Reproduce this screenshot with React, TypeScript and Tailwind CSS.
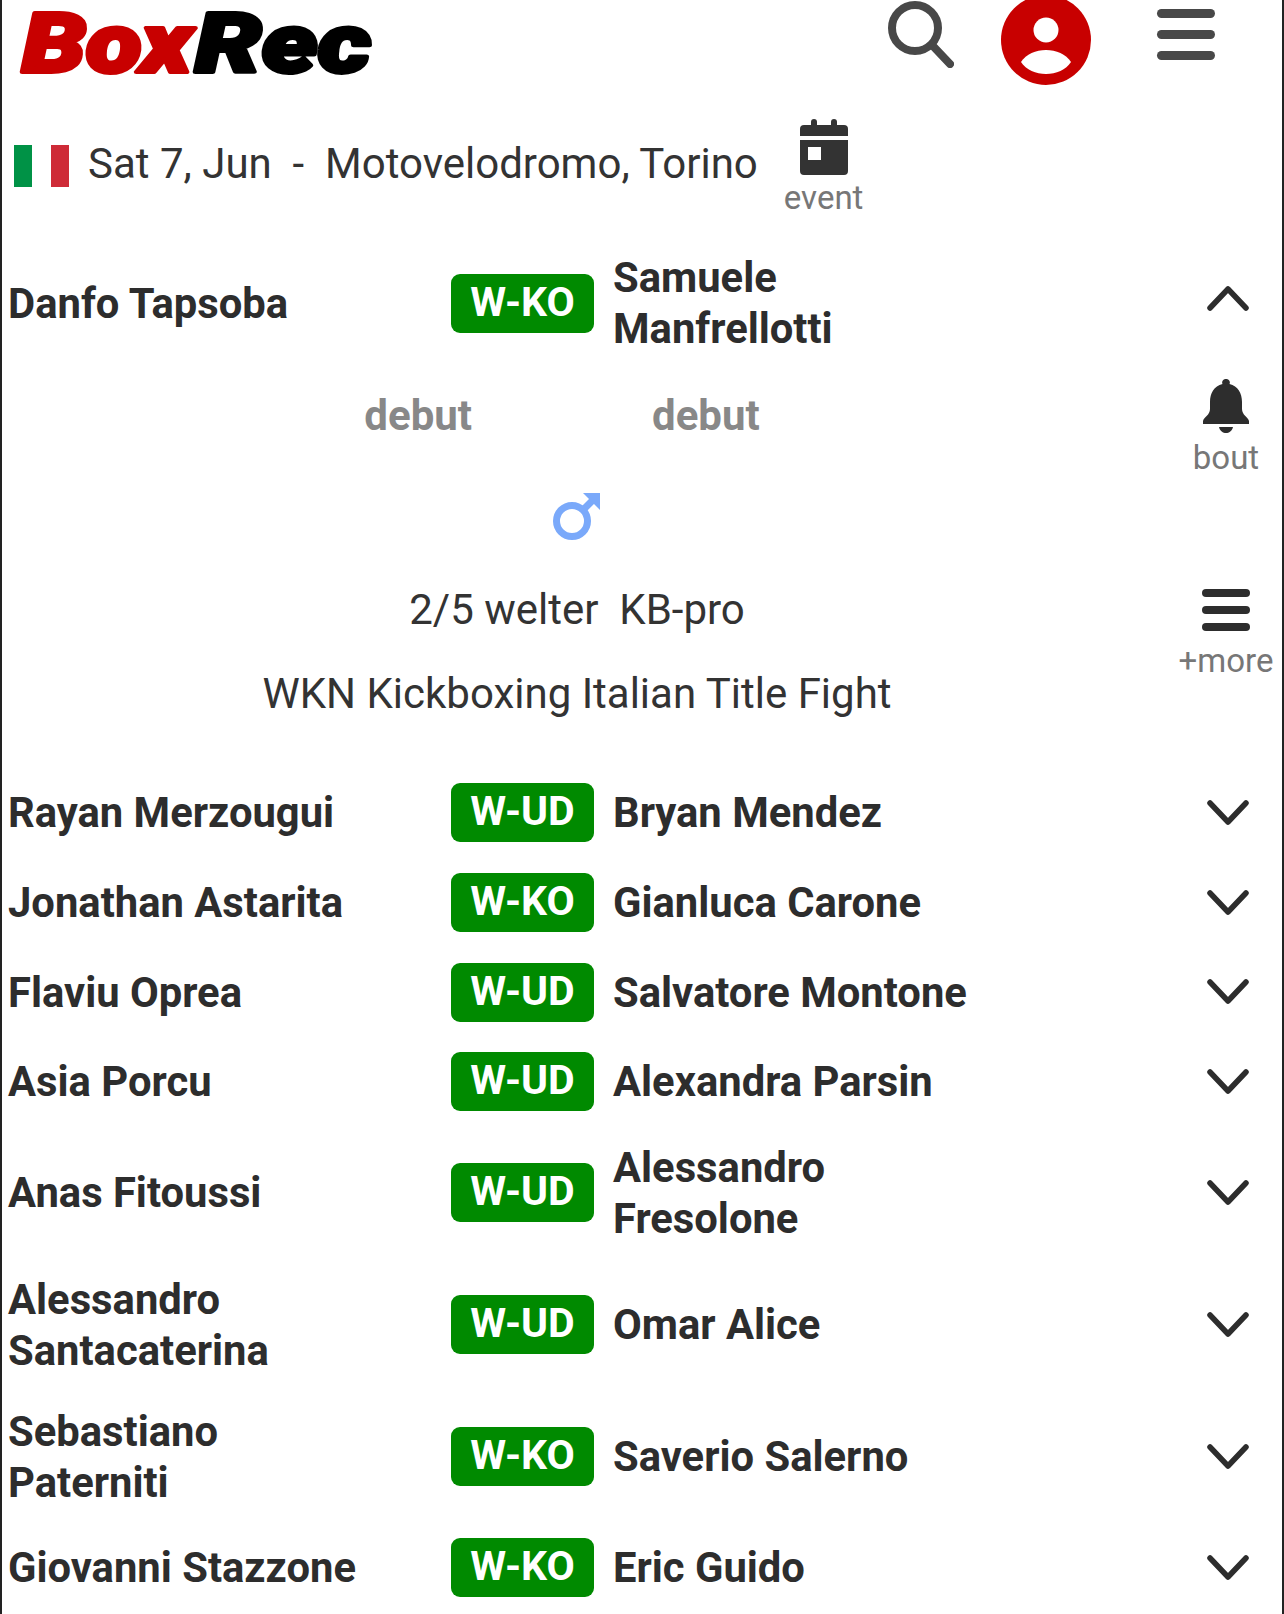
const font = { fontFamily: "Roboto, 'Noto Sans', sans-serif" };

function Chevron({ up = false }: { up?: boolean }) {
  return (
    <svg className={up ? "mb-[10px]" : ""} width="44" height="26" viewBox="0 0 44 26" fill="none" stroke="#2d2d2d" strokeWidth="5.5" strokeLinecap="round" strokeLinejoin="round">
      <path d={up ? "M4 23 L22 4 L40 23" : "M4 3 L22 22 L40 3"} />
    </svg>
  );
}

function Badge({ text }: { text: string }) {
  return (
    <div className="w-[143px] h-[59px] rounded-[9px] bg-[#008a00] text-white font-bold text-[41px] leading-[56px] flex justify-center shrink-0">
      {text}
    </div>
  );
}

function Row({ a, r, b, up }: { a: string; r: string; b: string; up?: boolean }) {
  return (
    <div className="flex items-center py-[15px] min-h-[89.7px]">
      <div className="w-[449px] pl-[6px] pr-[70px] shrink-0 font-bold text-[41.75px] leading-[51px] text-[#2d2d2d]">{a}</div>
      <Badge text={r} />
      <div className="w-[580px] pl-[19px] pr-[190px] shrink-0 font-bold text-[41.75px] leading-[51px] text-[#2d2d2d]">{b}</div>
      <div className="flex-1 flex justify-center"><Chevron up={up} /></div>
    </div>
  );
}

const rows = [
  ["Rayan Merzougui", "W-UD", "Bryan Mendez"],
  ["Jonathan Astarita", "W-KO", "Gianluca Carone"],
  ["Flaviu Oprea", "W-UD", "Salvatore Montone"],
  ["Asia Porcu", "W-UD", "Alexandra Parsin"],
  ["Anas Fitoussi", "W-UD", "Alessandro Fresolone"],
  ["Alessandro Santacaterina", "W-UD", "Omar Alice"],
  ["Sebastiano Paterniti", "W-KO", "Saverio Salerno"],
  ["Giovanni Stazzone", "W-KO", "Eric Guido"],
];

export default function App() {
  return (
    <div style={font} className="w-[1284px] h-[1614px] overflow-hidden bg-white border-x-2 border-[#222]">
      <header className="h-[112px] flex items-start">
        <div className="w-[886px]">
          <svg width="400" height="90" viewBox="0 0 400 90" fontFamily="Roboto, sans-serif" fontWeight="900" fontStyle="italic" fontSize="83" strokeWidth="4" strokeLinejoin="round">
            <text x="20" y="72" fill="#c80000" stroke="#c80000" textLength="170" lengthAdjust="spacingAndGlyphs">Box</text>
            <text x="193" y="72" fill="#000" stroke="#000" textLength="176" lengthAdjust="spacingAndGlyphs">Rec</text>
          </svg>
        </div>
        <svg className="mr-[47px] mt-[1px]" width="66" height="67" viewBox="0 0 66 67" fill="none" stroke="#484848" strokeWidth="8" strokeLinecap="round">
          <circle cx="27" cy="27" r="23" />
          <path d="M44 44 L62 63" />
        </svg>
        <svg className="mr-[66px]" width="90" height="85" viewBox="0 0 90 85">
          <circle cx="45" cy="40" r="45" fill="#c80000" />
          <circle cx="45" cy="30" r="12.5" fill="#fff" />
          <path d="M20 62 C30 46 60 46 70 62 C60 78 30 78 20 62 Z" fill="#fff" />
        </svg>
        <div className="w-[58px] pt-[9px] flex flex-col gap-[12px]">
          <div className="h-[9px] rounded-full bg-[#484848]" />
          <div className="h-[9px] rounded-full bg-[#484848]" />
          <div className="h-[9px] rounded-full bg-[#484848]" />
        </div>
      </header>
      <div className="h-[125px] flex items-start">
        <div className="flex items-center pl-[12px] pt-[27px]">
          <div className="w-[55px] h-[42px] mt-[4px] flex shrink-0">
            <div className="flex-1 bg-[#009246]" /><div className="flex-1 bg-white" /><div className="flex-1 bg-[#ce2b37]" />
          </div>
          <div className="ml-[19px] text-[42px] leading-[50px] text-[#333] whitespace-pre">Sat 7, Jun  -  Motovelodromo, Torino</div>
        </div>
        <div className="ml-[26px] pt-[7px] flex flex-col items-center">
          <svg width="48" height="56" viewBox="0 0 48 56" fill="#333">
            <rect x="11" y="0" width="6" height="10" rx="3" />
            <rect x="31" y="0" width="6" height="10" rx="3" />
            <path d="M4 6 H44 a4 4 0 0 1 4 4 V17 H0 V10 a4 4 0 0 1 4-4 Z" />
            <path fillRule="evenodd" d="M0 21 H48 V52 a4 4 0 0 1-4 4 H4 a4 4 0 0 1-4-4 Z M8 28 V41 H21 V28 Z" />
          </svg>
          <div className="mt-[5px] text-[33px] leading-[36px] text-[#777]">event</div>
        </div>
      </div>
      <Row a="Danfo Tapsoba" r="W-KO" b="Samuele Manfrellotti" up />
      <div className="flex">
        <div className="w-[1150px] shrink-0">
          <div className="flex h-[92px] items-center font-bold text-[42px] text-[#888]">
            <div className="w-[470px] text-right">debut</div>
            <div className="pl-[180px]">debut</div>
          </div>
          <div className="flex justify-center pt-[31px] h-[124px]">
            <svg width="48" height="48" viewBox="0 0 48 48" fill="none" stroke="#7aa9fa" strokeWidth="7">
              <circle cx="19" cy="29" r="15.5" />
              <path d="M29 19 L41 7" />
              <path d="M30 1 H47 V18 Z" fill="#7aa9fa" stroke="none" />
            </svg>
          </div>
          <div className="text-center text-[42px] leading-[50px] text-[#333] whitespace-pre">2/5 welter  KB-pro</div>
          <div className="text-center text-[42px] leading-[50px] mt-[34px] text-[#333]">WKN Kickboxing Italian Title Fight</div>
        </div>
        <div className="flex-1 flex flex-col items-center pt-[10px] ml-[18px]">
          <svg width="48" height="54" viewBox="0 0 48 54" fill="#2d2d2d">
            <path d="M24 0 a3.5 3.5 0 0 1 3.5 5 C36 7 40 14 40 23 V30 C40 36 46 38 47 42 V45 H1 V42 C2 38 8 36 8 30 V23 C8 14 12 7 20.5 5 A3.5 3.5 0 0 1 24 0 Z" />
            <path d="M17 48 H31 C30 52 27 54 24 54 C21 54 18 52 17 48 Z" />
          </svg>
          <div className="text-[33px] leading-[36px] text-[#777] mt-[7px]">bout</div>
          <div className="w-[48px] mt-[113px] flex flex-col gap-[9px]">
            <div className="h-[8px] rounded-full bg-[#2d2d2d]" />
            <div className="h-[8px] rounded-full bg-[#2d2d2d]" />
            <div className="h-[8px] rounded-full bg-[#2d2d2d]" />
          </div>
          <div className="text-[33px] leading-[36px] text-[#777] mt-[12px]">+more</div>
        </div>
      </div>
      <div className="mt-[49px]">
        {rows.map((x) => <Row key={x[0]} a={x[0]} r={x[1]} b={x[2]} />)}
      </div>
    </div>
  );
}
